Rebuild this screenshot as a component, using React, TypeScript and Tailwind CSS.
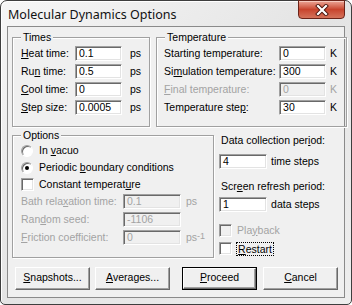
import React from 'react';

// Classic Win32 dialog: "Molecular Dynamics Options"

const U = ({ children }: { children: React.ReactNode }) => (
  <span className="underline underline-offset-[1px] decoration-[1px]">{children}</span>
);

const Edit = ({ value, w, disabled }: { value: string; w: string; disabled?: boolean }) => (
  <div
    className={`${w} h-[15px] shrink-0 border border-[#a0a0a0] border-r-white border-b-white shadow-[inset_1px_1px_0_#696969,inset_-1px_-1px_0_#e3e3e3] pl-[3px] leading-[13px] ${
      disabled ? 'bg-[#f0f0f0] text-[#a3a3a3]' : 'bg-white text-black'
    }`}
  >
    {value}
  </div>
);

const Check = ({ disabled }: { disabled?: boolean }) => (
  <span
    className={`w-[13px] h-[13px] shrink-0 border border-[#a0a0a0] border-r-white border-b-white shadow-[inset_1px_1px_0_#696969,inset_-1px_-1px_0_#e3e3e3] ${
      disabled ? 'bg-[#f0f0f0]' : 'bg-white'
    }`}
  />
);

const Radio = ({ checked }: { checked?: boolean }) => (
  <span className="w-[12px] h-[12px] shrink-0 rounded-full border border-[#a0a0a0] border-r-white border-b-white bg-white shadow-[inset_1px_1px_0_#696969] flex items-center justify-center">
    {checked && <span className="w-[4px] h-[4px] rounded-full bg-black" />}
  </span>
);

const Btn = ({ children, isDefault }: { children: React.ReactNode; isDefault?: boolean }) => (
  <div
    className={`w-[75px] h-[23px] shrink-0 ${isDefault ? 'border border-black' : ''}`}
  >
    <div className="w-full h-full border border-white border-r-[#696969] border-b-[#696969] shadow-[inset_-1px_-1px_0_#a0a0a0] bg-[#f0f0f0] flex items-center justify-center pb-px">
      {children}
    </div>
  </div>
);

const Row = ({ label, labelW, value, editW, unit, unitGap, disabled }: {
  label: React.ReactNode; labelW: string; value: string; editW: string; unit: React.ReactNode; unitGap: string; disabled?: boolean;
}) => (
  <div className={`flex items-center h-[15px] ${disabled ? 'text-[#a3a3a3]' : ''}`}>
    <span className={`${labelW} shrink-0 whitespace-nowrap`}>{label}</span>
    <Edit value={value} w={editW} disabled={disabled} />
    <span className={`${unitGap} whitespace-nowrap`}>{unit}</span>
  </div>
);

const groupCls = 'border border-[#a0a0a0] shadow-[inset_1px_1px_0_#fff,1px_1px_0_#fff] shrink-0';
const legendCls = 'px-[2px] leading-[13px] bg-[#f0f0f0]';

export default function App() {
  return (
    <div className="w-[352px] h-[305px] bg-white font-['Liberation_Sans',Arial,sans-serif] text-[10.5px] text-black">
      <div className="h-full rounded-t-[7px] rounded-b-[5px] border border-[#3e3e3e] bg-gradient-to-br from-[#f6f6f6] via-[#e4e4e4] to-[#eeeeee] shadow-[inset_1px_1px_0_#ffffff] flex flex-col px-[6px] pb-[6px]">
        {/* Title bar */}
        <div className="h-[25px] flex items-start justify-between shrink-0">
          <span className="pl-[1px] pt-[6px] font-['Noto_Sans',sans-serif] text-[12.5px] leading-[16px] text-[#111]">
            Molecular Dynamics Options
          </span>
          <div className="-mt-px w-[47px] h-[19px] rounded-b-[4px] border border-[#6b2318] bg-gradient-to-b from-[#eba596] via-[#c8432c] to-[#d4725a] shadow-[inset_0_1px_0_#f6c9bd] flex items-center justify-center">
            <svg width="14" height="12" viewBox="0 0 14 12">
              <path d="M3 2 L11 10 M11 2 L3 10" stroke="#4a140c" strokeWidth="4" strokeLinecap="square" />
              <path d="M3 2 L11 10 M11 2 L3 10" stroke="#ffffff" strokeWidth="2.2" strokeLinecap="square" />
            </svg>
          </div>
        </div>

        {/* Client area */}
        <div className="flex-1 border border-[#8a8a8a] bg-[#f0f0f0] flex flex-col pl-[4px]">
          <div className="flex gap-[6px] mt-[4px]">
            <fieldset className={`${groupCls} w-[132px] h-[96px] px-[8px]`}>
              <legend className={legendCls}>Times</legend>
              <div className="flex flex-col gap-[3px] pt-[2px]">
                <Row label={<><U>H</U>eat time:</>} labelW="w-[54px]" value="0.1" editW="w-[47px]" unit="ps" unitGap="ml-[8px]" />
                <Row label={<>Ru<U>n</U> time:</>} labelW="w-[54px]" value="0.5" editW="w-[47px]" unit="ps" unitGap="ml-[8px]" />
                <Row label={<><U>C</U>ool time:</>} labelW="w-[54px]" value="0" editW="w-[47px]" unit="ps" unitGap="ml-[8px]" />
                <Row label={<><U>S</U>tep size:</>} labelW="w-[54px]" value="0.0005" editW="w-[47px]" unit="ps" unitGap="ml-[8px]" />
              </div>
            </fieldset>
            <fieldset className={`${groupCls} w-[191px] h-[96px] px-[7px]`}>
              <legend className={`${legendCls} ml-[1px]`}>Temperature</legend>
              <div className="flex flex-col gap-[3px] pt-[2px]">
                <Row label="Starting temperature:" labelW="w-[115px]" value="0" editW="w-[47px]" unit="K" unitGap="ml-[4px]" />
                <Row label={<>Si<U>m</U>ulation temperature:</>} labelW="w-[115px]" value="300" editW="w-[47px]" unit="K" unitGap="ml-[4px]" />
                <Row label={<><U>F</U>inal temperature:</>} labelW="w-[115px]" value="0" editW="w-[47px]" unit="K" unitGap="ml-[4px]" disabled />
                <Row label={<>Temperature ste<U>p</U>:</>} labelW="w-[115px]" value="30" editW="w-[47px]" unit="K" unitGap="ml-[4px]" />
              </div>
            </fieldset>
          </div>

          <div className="flex gap-[5px] mt-[2px]">
            <fieldset className={`${groupCls} w-[200px] h-[129px] px-[8px]`}>
              <legend className={legendCls}>Options</legend>
              <div className="flex flex-col pt-[1px]">
                <div className="flex items-center h-[15px] gap-[6px]">
                  <Radio />
                  <span>In <U>v</U>acuo</span>
                </div>
                <div className="flex items-center h-[15px] gap-[6px] mt-[2px]">
                  <Radio checked />
                  <span>Periodic <U>b</U>oundary conditions</span>
                </div>
                <div className="flex items-center h-[15px] gap-[5px] mt-[2px]">
                  <Check />
                  <span>Constant temperat<U>u</U>re</span>
                </div>
                <div className="flex flex-col gap-[3px] mt-[2px]">
                  <Row label={<>Bath rela<U>x</U>ation time:</>} labelW="w-[102px]" value="0.1" editW="w-[58px]" unit="ps" unitGap="ml-[5px]" disabled />
                  <Row label={<>Ran<U>d</U>om seed:</>} labelW="w-[102px]" value="-1106" editW="w-[58px]" unit="" unitGap="ml-[5px]" disabled />
                  <Row
                    label={<><U>F</U>riction coefficient:</>}
                    labelW="w-[102px]"
                    value="0"
                    editW="w-[58px]"
                    unit={<>ps<sup className="text-[9px] relative -top-[2px]">-1</sup></>}
                    unitGap="ml-[5px]"
                    disabled
                  />
                </div>
              </div>
            </fieldset>

            <div className="flex flex-col pl-[2px]">
              <span className="mt-[5px] leading-[13px] whitespace-nowrap">Data collection per<U>i</U>od:</span>
              <div className="flex items-center mt-[7px] h-[15px] -ml-[2px]">
                <Edit value="4" w="w-[48px]" />
                <span className="ml-[4px]">time steps</span>
              </div>
              <span className="mt-[11px] leading-[13px] whitespace-nowrap">Scr<U>e</U>en refresh period:</span>
              <div className="flex items-center mt-[4px] h-[15px] -ml-[2px]">
                <Edit value="1" w="w-[48px]" />
                <span className="ml-[4px]">data steps</span>
              </div>
              <div className="flex items-center mt-[11px] h-[15px] -ml-[2px] gap-[5px] text-[#a3a3a3]">
                <Check disabled />
                <span>Pla<U>y</U>back</span>
              </div>
              <div className="flex items-center mt-[3px] h-[15px] -ml-[2px] gap-[4px]">
                <Check />
                <span className="border border-dotted border-black px-px leading-[12px]"><U>R</U>estart</span>
              </div>
            </div>
          </div>

          <div className="flex mt-[9px] pl-[3px]">
            <Btn><U>S</U>napshots...</Btn>
            <div className="ml-[5px]"><Btn><U>A</U>verages...</Btn></div>
            <div className="ml-[12px]"><Btn isDefault>
              <U>P</U>roceed
            </Btn></div>
            <div className="ml-[6px]"><Btn><U>C</U>ancel</Btn></div>
          </div>
        </div>
      </div>
    </div>
  );
}
